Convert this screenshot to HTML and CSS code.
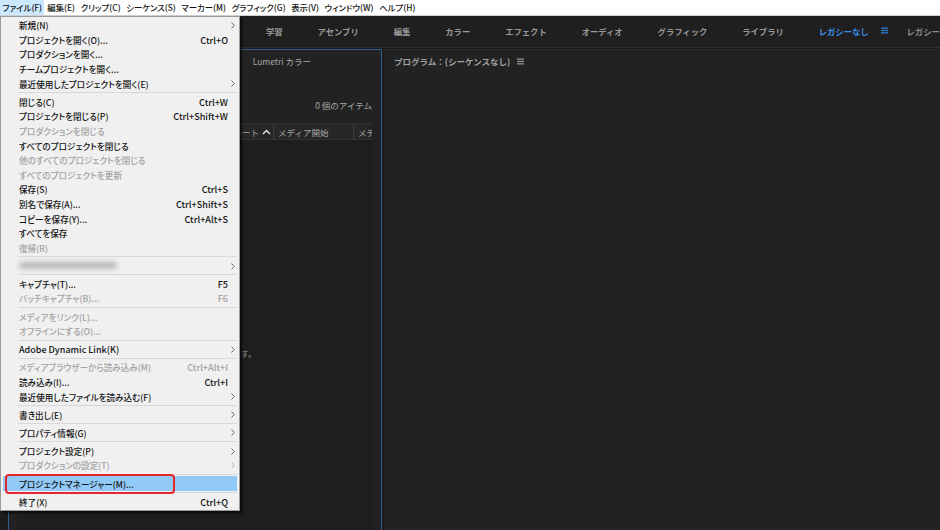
FILE: index.html
```html
<!DOCTYPE html>
<html lang="ja">
<head>
<meta charset="utf-8">
<title>Premiere Pro - ファイルメニュー</title>
<link rel="stylesheet" href="styles.css">
</head>
<body>
<div class="menubar">
  <span class="mb-item active">ファイル(F)</span>
  <span class="mb-item">編集(E)</span>
  <span class="mb-item">クリップ(C)</span>
  <span class="mb-item">シーケンス(S)</span>
  <span class="mb-item">マーカー(M)</span>
  <span class="mb-item">グラフィック(G)</span>
  <span class="mb-item">表示(V)</span>
  <span class="mb-item">ウィンドウ(W)</span>
  <span class="mb-item">ヘルプ(H)</span>
</div>

<div class="app">
  <div class="workspaces">
    <span class="ws">学習</span>
    <span class="ws">アセンブリ</span>
    <span class="ws">編集</span>
    <span class="ws">カラー</span>
    <span class="ws">エフェクト</span>
    <span class="ws">オーディオ</span>
    <span class="ws">グラフィック</span>
    <span class="ws">ライブラリ</span>
    <span class="ws current">レガシーなし<svg class="ham blue" viewBox="0 0 7 7" width="7" height="7"><rect x="0" y="0.5" width="7" height="1.3"/><rect x="0" y="2.85" width="7" height="1.3"/><rect x="0" y="5.2" width="7" height="1.3"/></svg></span>
    <span class="ws dim">レガシーなし</span>
  </div>

  <div class="panels">
    <section class="panel project">
      <div class="panel-tabs">
        <span class="tab">プロジェクト: 名称未設定<svg class="ham" viewBox="0 0 7 7" width="7" height="7"><rect x="0" y="0.5" width="7" height="1.3"/><rect x="0" y="2.85" width="7" height="1.3"/><rect x="0" y="5.2" width="7" height="1.3"/></svg></span>
        <span class="tab">メディアブラウザー</span>
        <span class="tab">Lumetri カラー</span>
      </div>
      <div class="count">0 個のアイテム</div>
      <div class="list">
        <div class="list-head">
          <span class="col c1">名前</span>
          <span class="col c2">フレームレート<svg class="caret" viewBox="0 0 9 6" width="9" height="6"><path d="M1 5 L4.5 1.5 L8 5" fill="none" stroke="#e6e6e6" stroke-width="1.4"/></svg></span>
          <span class="col c3">メディア開始</span>
          <span class="col c4">メディア終了</span>
        </div>
        <div class="list-body">
          <p class="empty">メディアを読み込んで開始します。</p>
        </div>
      </div>
    </section>

    <section class="panel program">
      <div class="panel-tabs">
        <span class="tab strong">プログラム：(シーケンスなし)<svg class="ham" viewBox="0 0 7 7" width="7" height="7"><rect x="0" y="0.5" width="7" height="1.3"/><rect x="0" y="2.85" width="7" height="1.3"/><rect x="0" y="5.2" width="7" height="1.3"/></svg></span>
      </div>
    </section>
  </div>
</div>

<div class="dropdown">
  <div class="mi">新規(N)<svg class="arrow" viewBox="0 0 4 7" width="4" height="7"><path d="M0.5 0.5 L3.3 3.5 L0.5 6.5" fill="none" stroke="#6b6b6b" stroke-width="1"/></svg></div>
  <div class="mi">プロジェクトを開く(O)...<span class="sc">Ctrl+O</span></div>
  <div class="mi">プロダクションを開く...</div>
  <div class="mi">チームプロジェクトを開く...</div>
  <div class="mi">最近使用したプロジェクトを開く(E)<svg class="arrow" viewBox="0 0 4 7" width="4" height="7"><path d="M0.5 0.5 L3.3 3.5 L0.5 6.5" fill="none" stroke="#6b6b6b" stroke-width="1"/></svg></div>
  <div class="sep"></div>
  <div class="mi">閉じる(C)<span class="sc">Ctrl+W</span></div>
  <div class="mi">プロジェクトを閉じる(P)<span class="sc">Ctrl+Shift+W</span></div>
  <div class="mi dis">プロダクションを閉じる</div>
  <div class="mi">すべてのプロジェクトを閉じる</div>
  <div class="mi dis">他のすべてのプロジェクトを閉じる</div>
  <div class="mi dis">すべてのプロジェクトを更新</div>
  <div class="mi">保存(S)<span class="sc">Ctrl+S</span></div>
  <div class="mi">別名で保存(A)...<span class="sc">Ctrl+Shift+S</span></div>
  <div class="mi">コピーを保存(Y)...<span class="sc">Ctrl+Alt+S</span></div>
  <div class="mi">すべてを保存</div>
  <div class="mi dis">復帰(R)</div>
  <div class="sep"></div>
  <div class="mi"><span class="blurred"></span><svg class="arrow" viewBox="0 0 4 7" width="4" height="7"><path d="M0.5 0.5 L3.3 3.5 L0.5 6.5" fill="none" stroke="#6b6b6b" stroke-width="1"/></svg></div>
  <div class="sep"></div>
  <div class="mi">キャプチャ(T)...<span class="sc">F5</span></div>
  <div class="mi dis">バッチキャプチャ(B)...<span class="sc">F6</span></div>
  <div class="sep"></div>
  <div class="mi dis">メディアをリンク(L)...</div>
  <div class="mi dis">オフラインにする(O)...</div>
  <div class="sep"></div>
  <div class="mi latin">Adobe Dynamic Link(K)<svg class="arrow" viewBox="0 0 4 7" width="4" height="7"><path d="M0.5 0.5 L3.3 3.5 L0.5 6.5" fill="none" stroke="#6b6b6b" stroke-width="1"/></svg></div>
  <div class="sep"></div>
  <div class="mi dis">メディアブラウザーから読み込み(M)<span class="sc">Ctrl+Alt+I</span></div>
  <div class="mi">読み込み(I)...<span class="sc">Ctrl+I</span></div>
  <div class="mi">最近使用したファイルを読み込む(F)<svg class="arrow" viewBox="0 0 4 7" width="4" height="7"><path d="M0.5 0.5 L3.3 3.5 L0.5 6.5" fill="none" stroke="#6b6b6b" stroke-width="1"/></svg></div>
  <div class="sep"></div>
  <div class="mi">書き出し(E)<svg class="arrow" viewBox="0 0 4 7" width="4" height="7"><path d="M0.5 0.5 L3.3 3.5 L0.5 6.5" fill="none" stroke="#6b6b6b" stroke-width="1"/></svg></div>
  <div class="sep"></div>
  <div class="mi">プロパティ情報(G)<svg class="arrow" viewBox="0 0 4 7" width="4" height="7"><path d="M0.5 0.5 L3.3 3.5 L0.5 6.5" fill="none" stroke="#6b6b6b" stroke-width="1"/></svg></div>
  <div class="sep"></div>
  <div class="mi">プロジェクト設定(P)<svg class="arrow" viewBox="0 0 4 7" width="4" height="7"><path d="M0.5 0.5 L3.3 3.5 L0.5 6.5" fill="none" stroke="#6b6b6b" stroke-width="1"/></svg></div>
  <div class="mi dis">プロダクションの設定(T)<svg class="arrow" viewBox="0 0 4 7" width="4" height="7"><path d="M0.5 0.5 L3.3 3.5 L0.5 6.5" fill="none" stroke="#b5b5b5" stroke-width="1"/></svg></div>
  <div class="sep"></div>
  <div class="mi hl">プロジェクトマネージャー(M)...<span class="mark"></span></div>
  <div class="sep"></div>
  <div class="mi">終了(X)<span class="sc">Ctrl+Q</span></div>
</div>
</body>
</html>
```

FILE: styles.css
```css
* { box-sizing: border-box; }

body {
  margin: 0;
  width: 940px;
  height: 530px;
  overflow: hidden;
  position: relative;
  background: #1c1c1c;
  font-family: "Noto Sans CJK JP", "Noto Sans", sans-serif;
}

/* ---------- top menu bar ---------- */
.menubar {
  height: 16px;
  background: #ffffff;
  border-bottom: 1px solid #cfcfcf;
  display: flex;
  align-items: center;
  gap: 0;
  font-size: 8.4px;
  font-weight: 500;
  color: #111;
  font-feature-settings: "palt";
  white-space: nowrap;
}
.mb-item {
  padding: 0 2.8px;
  line-height: 15px;
}
.mb-item.active {
  background: #cce8ff;
  padding: 0 2.4px;
}

/* ---------- application ---------- */
.app {
  height: 514px;
  display: flex;
  flex-direction: column;
}

.workspaces {
  height: 32px;
  flex: none;
  background: #1f1f1f;
  border-bottom: 1px solid #2f2f2f;
  display: flex;
  align-items: center;
  gap: 35px;
  padding: 0 0 2px 266px;
  font-size: 8.3px;
  font-weight: 700;
  color: #9a9a9a;
  white-space: nowrap;
  overflow: hidden;
}
.ws { display: flex; align-items: center; }
.ws.current { color: #3d8ee8; }
.ws.dim { color: #8c8c8c; margin-left: -16px; }

.ham { fill: #8e8e8e; flex: none; }
.ham.blue { fill: #2f78d0; margin-left: 12px; }

.panels {
  flex: 1;
  display: flex;
  gap: 2px;
  padding: 1px 0 0 8px;
  min-height: 0;
}

.panel {
  background: #222222;
  display: flex;
  flex-direction: column;
  font-size: 8.5px;
  color: #a6a6a6;
  white-space: nowrap;
}

.project {
  width: 374px;
  border: 1px solid #2e5d90;
  border-bottom: none;
}

.program {
  flex: 1;
  border-top: 1px solid #2a2a2a;
}

.panel-tabs {
  height: 22px;
  flex: none;
  display: flex;
  align-items: center;
  gap: 24px;
  padding-left: 9px;
}
.tab { display: flex; align-items: center; gap: 6px; }
.program .panel-tabs { padding-left: 10px; }
.tab.strong { font-weight: 700; color: #a3a3a3; gap: 7px; }

.count {
  margin-top: 27px;
  line-height: 12px;
  text-align: right;
  padding-right: 9px;
}

.list {
  flex: 1;
  margin: 12px 9px 0 8px;
  display: flex;
  flex-direction: column;
  background: #1e1e1e;
  min-height: 0;
}

.list-head {
  height: 17px;
  flex: none;
  display: grid;
  grid-template-columns: 120px 137px 80px 1fr;
  background: #272727;
  border-top: 1px solid #303030;
  border-bottom: 1px solid #303030;
  overflow: hidden;
}
.col {
  display: flex;
  align-items: center;
  padding-left: 4px;
  border-right: 1px solid #3a3a3a;
  overflow: hidden;
}
.col.c2 { justify-content: flex-end; gap: 3px; padding-right: 2px; }
.col.c4 { border-right: none; }
.caret { flex: none; }

.list-body {
  flex: 1;
  padding: 207px 10px 0 0;
}
.empty {
  margin: 0;
  text-align: center;
  line-height: 12px;
  color: #8f8f8f;
}

/* ---------- dropdown menu ---------- */
.dropdown {
  position: absolute;
  left: 0;
  top: 16px;
  width: 240px;
  background: #f0f0f0;
  border: 1px solid #9a9a9a;
  box-shadow: 2px 2px 2px rgba(0, 0, 0, 0.7);
  padding: 1px 0;
  font-size: 8.6px;
  font-weight: 500;
  color: #141414;
  font-feature-settings: "palt";
  white-space: nowrap;
}

.mi {
  position: relative;
  height: 14.6px;
  display: flex;
  align-items: center;
  margin: 0 2px;
  padding: 0 9px 0 16px;
}
.mi.latin { font-size: 9px; }
.mi.dis { color: #a2a2a2; }
.mi.hl { background: #91c9f7; }
.sc { margin-left: auto; font-size: 9.1px; }
.arrow { position: absolute; right: 2px; top: 4px; }

.sep {
  height: 1px;
  background: #d8d8d8;
  margin: 1.25px 2px 1.25px 17px;
}

.blurred {
  width: 98px;
  height: 7px;
  border-radius: 3px;
  background: #b9b9b9;
  filter: blur(2.5px);
}

.mark {
  position: absolute;
  left: 2px;
  top: -2.5px;
  width: 170px;
  height: 20px;
  border: 2px solid #e5262b;
  border-radius: 4px;
}
```
